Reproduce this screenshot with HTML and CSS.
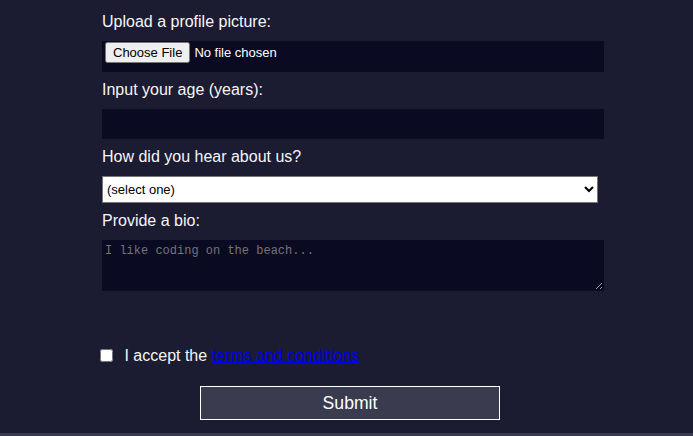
FILE: index.html
```html
<!DOCTYPE html>
<html lang="en">
<head>
<meta charset="utf-8">
<title>Survey Form</title>
<link rel="stylesheet" href="styles.css">
</head>
<body>
<form class="survey">
  <label class="field">Upload a profile picture:
    <input class="control file" type="file" name="file">
  </label>
  <label class="field">Input your age (years):
    <input class="control" type="number" name="age" min="13" max="120">
  </label>
  <label class="field">How did you hear about us?
    <select class="select" name="referrer">
      <option value="">(select one)</option>
      <option value="1">freeCodeCamp News</option>
      <option value="2">freeCodeCamp YouTube Channel</option>
      <option value="3">freeCodeCamp Forum</option>
      <option value="4">Other</option>
    </select>
  </label>
  <label class="field">Provide a bio:
    <textarea class="control bio" name="bio" rows="3" cols="30" placeholder="I like coding on the beach..."></textarea>
  </label>
  <label class="terms"><input class="check" type="checkbox" name="terms"> I accept the <a href="#" class="link">terms and conditions</a></label>
  <input class="submit" type="submit" value="Submit">
</form>
<div class="bottom-bar"></div>
</body>
</html>
```
FILE: styles.css
```css
html, body {
  margin: 0;
  padding: 0;
}
body {
  background-color: #1b1b32;
  color: #f5f6f7;
  font-family: "Liberation Sans", Arial, sans-serif;
  font-size: 16px;
  height: 436px;
  overflow: hidden;
  display: flex;
  flex-direction: column;
}
.survey {
  width: 496px;
  margin-left: 102px;
  padding-top: 12px;
  flex: 1;
}
.field {
  display: block;
  line-height: 19px;
  margin: 0 0 8px 0;
}
.control {
  display: block;
  width: 100%;
  margin: 10px 0 0 0;
  padding: 1px 2px;
  background-color: #0a0a23;
  border: 1px solid #0a0a23;
  color: #ffffff;
  box-sizing: content-box;
  font-family: "Liberation Sans", Arial, sans-serif;
  font-size: 13px;
}
.file {
  height: 29px;
  padding: 0 2px;
}
.control[type="number"] {
  height: 26px;
}
.select {
  display: block;
  width: 100%;
  height: 27px;
  margin: 10px 0 0 0;
  background-color: #ffffff;
  color: #000000;
  border: 1px solid #767676;
  border-radius: 0;
  font-family: "Liberation Sans", Arial, sans-serif;
  font-size: 13px;
}
.bio {
  height: 45px;
  padding: 2px;
  font-family: "Liberation Mono", monospace;
  font-size: 12px;
  line-height: 16px;
  resize: both;
}
.bio::placeholder {
  color: #757575;
}
.terms {
  display: block;
  margin-top: 55px;
  line-height: 19px;
}
.check {
  width: 13px;
  height: 13px;
  margin: 0 7px 0 -2px;
  vertical-align: -1px;
}
.link {
  color: #0000ee;
}
.submit {
  display: block;
  width: 300px;
  height: 34px;
  margin: 21px 0 0 98px;
  background-color: #3b3b4f;
  border: 1px solid #ffffff;
  color: #ffffff;
  font-family: "Liberation Sans", Arial, sans-serif;
  font-size: 17.6px;
  padding: 0;
}
.bottom-bar {
  height: 3px;
  background-color: #3b3b4f;
}
```
